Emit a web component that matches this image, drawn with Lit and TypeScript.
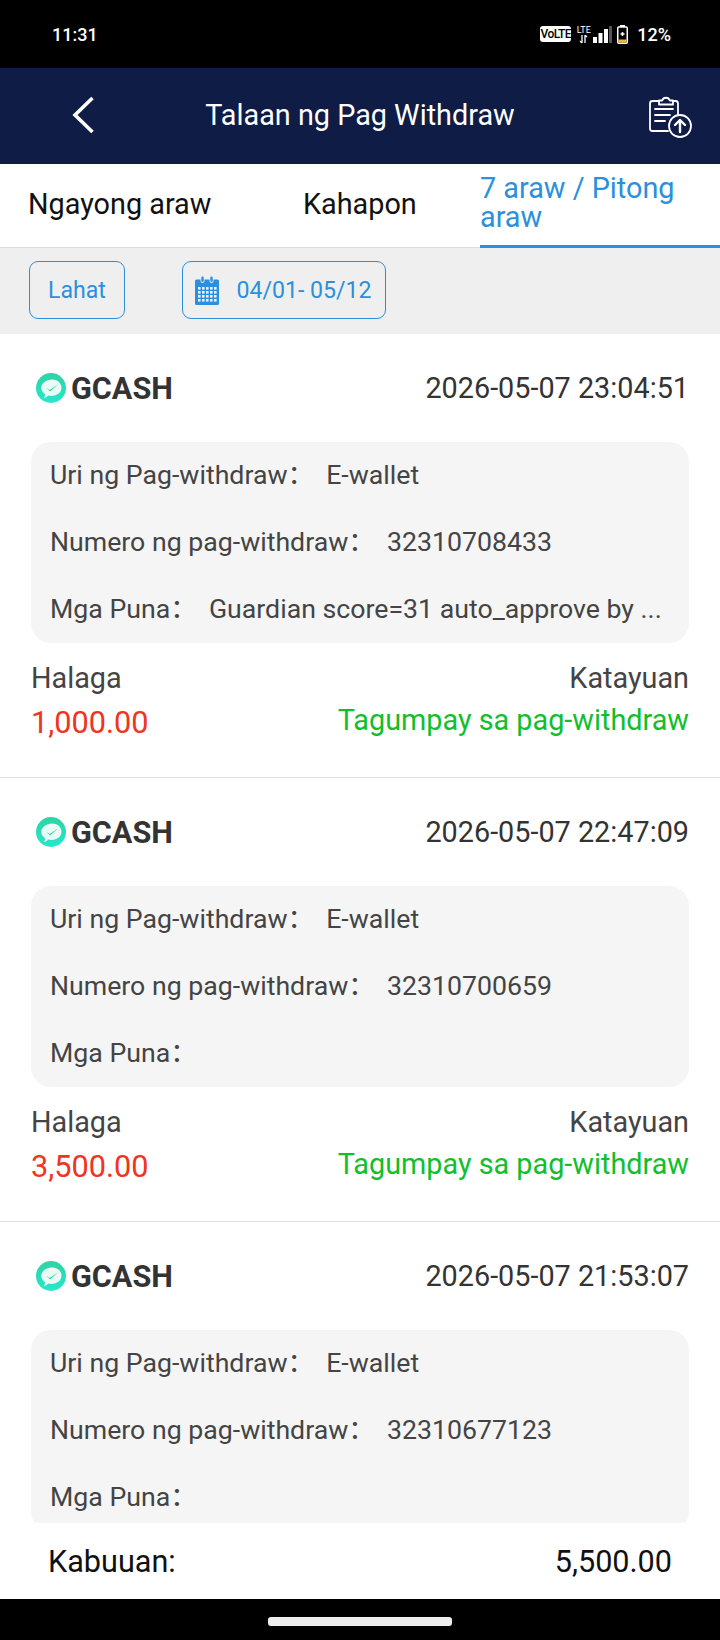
import { LitElement, html, css, svg } from "lit";
import { customElement } from "lit/decorators.js";

interface Rec {
  time: string;
  no: string;
  note: string;
  amount?: string;
}

// la tercera tarjeta queda tapada por el total, no lleva pie
const RECORDS: Rec[] = [
  { time: "2026-05-07 23:04:51", no: "32310708433", note: "Guardian score=31 auto_approve by ...", amount: "1,000.00" },
  { time: "2026-05-07 22:47:09", no: "32310700659", note: "", amount: "3,500.00" },
  { time: "2026-05-07 21:53:07", no: "32310677123", note: "" },
];

// logo de la cartera: círculo turquesa con burbuja blanca
const gcashIcon = html`<svg class="logo" viewBox="0 0 30 30">
  <defs>
    <linearGradient id="gc" x1="0" y1="0" x2="0" y2="1">
      <stop offset="0" stop-color="#2ed3a5"></stop>
      <stop offset="1" stop-color="#25e8cb"></stop>
    </linearGradient>
  </defs>
  <circle cx="15" cy="15" r="15" fill="url(#gc)"></circle>
  <path d="M16 6.500c5.200 0 9.500 3.300 9.500 8.300 0 4.800-4.600 8.200-10 8.200-1 0-2-.1-3-.4-1.200 1.100-2.700 2-4.700 2.300.8-1 1.300-2.200 1.400-3.500-2.300-1.500-4-3.700-4-6.300C5.200 10 10.500 6.500 16 6.500z" fill="#eafbf6"></path>
  <path d="M10.200 14.800l3.600 2.200 8.200-5.700-7.800 7.300z" fill="#2ed3a5"></path>
</svg>`;

const calendarIcon = html`<svg class="cal" viewBox="0 0 26 29">
  <path d="M2.500 3.500h4v1.500a2 2 0 0 0 4 0V3.500h5v1.500a2 2 0 0 0 4 0V3.500h4A1.500 1.500 0 0 1 25 5v22.500a1.500 1.500 0 0 1-1.500 1.500h-21A1.500 1.500 0 0 1 1 27.500V5a1.500 1.500 0 0 1 1.500-1.500z" fill="#2a90de"></path>
  <rect x="7.300" y="0.500" width="2.400" height="5.500" rx="1.200" fill="#2a90de"></rect>
  <rect x="16.300" y="0.500" width="2.400" height="5.500" rx="1.200" fill="#2a90de"></rect>
  ${[11, 15, 19, 23].map((y) =>
    [4, 8, 12, 16, 20].map((x) => svg`<rect x=${x} y=${y} width="2.600" height="2.600" fill="#e6f2fb"></rect>`)
  )}
</svg>`;

const uploadIcon = html`<svg class="upload" viewBox="0 0 44 44" fill="none" stroke="#fff" stroke-width="1.800" stroke-linecap="round" stroke-linejoin="round">
  <path d="M11 6H4.500A2.500 2.500 0 0 0 2 8.500v25A2.500 2.500 0 0 0 4.500 36H20"></path>
  <path d="M25 6h2.500A2.500 2.500 0 0 1 30 8.500V19"></path>
  <path d="M11 9.500V5.500h3.200a4 4 0 0 1 7.600 0H25v4z"></path>
  <path d="M7 14h18M7 20h15M7 26h10"></path>
  <circle cx="32" cy="31" r="11" fill="#0f1c45"></circle>
  <path d="M32 37V25.500M27 30l5-5 5 5" stroke-width="2.400"></path>
</svg>`;

@customElement("app-root")
export class AppRoot extends LitElement {
  static styles = css`
    :host {
      display: block;
      width: 720px;
      height: 1640px;
      font-family: Roboto, "Noto Sans CJK SC", "Noto Sans", sans-serif;
      color: #333;
      background: #fff;
    }
    .page {
      height: 1640px;
      display: flex;
      flex-direction: column;
      overflow: hidden;
    }

    /* barra de estado */
    .status {
      height: 68px;
      flex: none;
      background: #000;
      color: #fff;
      display: flex;
      align-items: center;
      justify-content: space-between;
      padding: 0 49px 0 52px;
      box-sizing: border-box;
      font-size: 18px;
      font-weight: 500;
    }
    .status-right {
      display: flex;
      align-items: center;
    }
    .volte {
      background: #fff;
      color: #000;
      font-size: 12px;
      line-height: 16px;
      height: 16px;
      width: 31px;
      border-radius: 3px;
      text-align: center;
      font-weight: 500;
      letter-spacing: -0.6px;
    }
    .lte {
      width: 15px;
      margin-left: 5px;
      display: flex;
      flex-direction: column;
      align-items: center;
      font-size: 9px;
      line-height: 8px;
      font-weight: 400;
    }
    .lte svg {
      width: 9px;
      height: 8px;
      display: block;
      margin-top: 1px;
    }
    .signal {
      width: 19px;
      height: 17px;
      margin-left: 2px;
      display: block;
    }
    .battery {
      width: 11px;
      height: 19px;
      display: block;
      margin-left: 5px;
    }
    .pct {
      margin-left: 9px;
    }

    /* cabecera */
    .header {
      height: 96px;
      flex: none;
      background: #0f1c45;
      color: #fff;
      display: grid;
      grid-template-columns: 96px 1fr 96px;
      align-items: center;
    }
    .back {
      width: 24px;
      height: 40px;
      margin: -3px 0 0 71px;
      display: block;
    }
    .title {
      font-size: 28.8px;
      text-align: center;
      margin-top: -3px;
    }
    .upload {
      width: 44px;
      height: 44px;
      display: block;
      margin: 2px 0 0 24px;
    }

    /* pestañas */
    .tabs {
      height: 84px;
      flex: none;
      box-sizing: border-box;
      display: grid;
      grid-template-columns: 303px 177px 240px;
      border-bottom: 1px solid #dcdcdc;
      font-size: 28.8px;
      color: #111;
      background: #fff;
    }
    .tab {
      display: flex;
      align-items: center;
      padding: 0 0 4px 28px;
    }
    .tab.mid {
      padding-left: 0;
    }
    .tab.on {
      color: #2a90de;
      padding: 0 10px 3px 0;
      line-height: 29px;
      height: 84px;
      box-sizing: border-box;
      border-bottom: 3px solid #2a90de;
    }

    /* filtros */
    .filters {
      height: 86px;
      flex: none;
      box-sizing: border-box;
      background: #efefef;
      display: flex;
      align-items: flex-start;
      padding: 13px 0 0 29px;
      gap: 57px;
      color: #2a90de;
      font-size: 23.1px;
    }
    .chip {
      height: 58px;
      box-sizing: border-box;
      border: 1px solid #2a90de;
      border-radius: 9px;
      display: flex;
      align-items: center;
      justify-content: center;
    }
    .chip.all {
      width: 96px;
    }
    .chip.date {
      width: 204px;
      gap: 17px;
      padding-right: 1px;
    }
    .cal {
      width: 26px;
      height: 29px;
      display: block;
      margin-left: -2px;
    }

    /* lista */
    .list {
      flex: 1;
      min-height: 0;
      overflow: hidden;
    }
    .card {
      height: 444px;
      box-sizing: border-box;
      padding: 0 31px;
      border-bottom: 1px solid #e2e2e2;
    }
    .card-head {
      height: 108px;
      display: flex;
      align-items: center;
      justify-content: space-between;
      font-size: 28.8px;
      color: #333;
    }
    .brand {
      display: flex;
      align-items: center;
      gap: 5px;
      font-size: 30.6px;
      font-weight: 700;
      margin-left: 5px;
    }
    .logo {
      width: 30px;
      height: 30px;
      display: block;
    }
    .box {
      height: 201px;
      box-sizing: border-box;
      background: #f5f5f5;
      border-radius: 20px;
      padding: 16px 19px 0;
      display: flex;
      flex-direction: column;
      gap: 33px;
      font-size: 26.7px;
      color: #444;
    }
    .row {
      display: flex;
      height: 34px;
      line-height: 34px;
      white-space: nowrap;
    }
    .row .val {
      margin-left: 12px;
    }
    .foot {
      margin-top: 13px;
      display: grid;
      grid-template-columns: auto auto;
      justify-content: space-between;
      row-gap: 1px;
      font-size: 28.8px;
      line-height: 44px;
      color: #444;
    }
    .foot .r {
      text-align: right;
    }
    .amount {
      color: #f0341e;
      font-size: 30.7px;
    }
    .foot .ok {
      color: #0fc02c;
      line-height: 38px;
    }

    /* total */
    .total {
      height: 76px;
      flex: none;
      background: #fff;
      display: flex;
      align-items: center;
      justify-content: space-between;
      padding: 0 48px;
      font-size: 30.6px;
      color: #111;
      margin-top: -1px;
    }
    .nav {
      height: 41px;
      flex: none;
      background: #000;
      display: flex;
      justify-content: center;
      padding-top: 18px;
      box-sizing: border-box;
    }
    .pill {
      width: 184px;
      height: 9px;
      border-radius: 3px;
      background: #eee;
    }
  `;

  private card(r: Rec) {
    return html`<div class="card">
      <div class="card-head">
        <div class="brand">${gcashIcon}<span>GCASH</span></div>
        <div>${r.time}</div>
      </div>
      <div class="box">
        <div class="row"><span>Uri ng Pag-withdraw：</span><span class="val">E-wallet</span></div>
        <div class="row"><span>Numero ng pag-withdraw：</span><span class="val">${r.no}</span></div>
        <div class="row"><span>Mga Puna：</span><span class="val">${r.note}</span></div>
      </div>
      ${r.amount
        ? html`<div class="foot">
            <div>Halaga</div>
            <div class="r">Katayuan</div>
            <div class="amount">${r.amount}</div>
            <div class="r ok">Tagumpay sa pag-withdraw</div>
          </div>`
        : ""}
    </div>`;
  }

  render() {
    return html`<div class="page">
      <div class="status">
        <span>11:31</span>
        <div class="status-right">
          <div class="volte">VoLTE</div>
          <div class="lte">
            <span>LTE</span>
            <svg viewBox="0 0 9 8" stroke="#fff" stroke-width="1.300" fill="none">
              <path d="M3 0v8M1 6l2 2M6 8V0M8 2L6 0"></path>
            </svg>
          </div>
          <svg class="signal" viewBox="0 0 19 17">
            <rect x="0" y="11" width="4" height="6" fill="#fff"></rect>
            <rect x="5.500" y="7" width="4" height="10" fill="#fff"></rect>
            <rect x="11" y="3" width="4" height="14" fill="#fff"></rect>
            <rect x="16" y="0" width="3" height="17" fill="#555"></rect>
          </svg>
          <svg class="battery" viewBox="0 0 11 19">
            <rect x="3" y="0" width="5" height="2" fill="#fff"></rect>
            <rect x="0.750" y="2" width="9.500" height="16.250" rx="1" fill="none" stroke="#fff" stroke-width="1.500"></rect>
            <rect x="1.500" y="14.500" width="8" height="3" fill="#e8b93c"></rect>
            <path d="M3.500 9h4M5.500 7v4" stroke="#fff" stroke-width="1.500"></path>
          </svg>
          <span class="pct">12%</span>
        </div>
      </div>

      <div class="header">
        <svg class="back" viewBox="0 0 24 40" fill="none" stroke="#fff" stroke-width="3.600">
          <path d="M21.500 3L4 20l17.500 17"></path>
        </svg>
        <div class="title">Talaan ng Pag Withdraw</div>
        ${uploadIcon}
      </div>

      <div class="tabs">
        <div class="tab">Ngayong araw</div>
        <div class="tab mid">Kahapon</div>
        <div class="tab on">7 araw / Pitong araw</div>
      </div>

      <div class="filters">
        <div class="chip all">Lahat</div>
        <div class="chip date">${calendarIcon}<span>04/01- 05/12</span></div>
      </div>

      <div class="list">${RECORDS.map((r) => this.card(r))}</div>

      <div class="total"><span>Kabuuan:</span><span>5,500.00</span></div>
      <div class="nav"><div class="pill"></div></div>
    </div>`;
  }
}
